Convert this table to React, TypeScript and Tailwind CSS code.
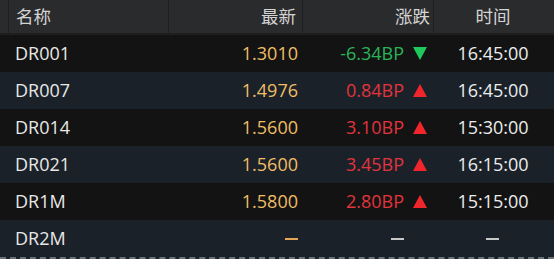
const rows = [
  { name: 'DR001', price: '1.3010', change: '-6.34BP', dir: 'down', time: '16:45:00' },
  { name: 'DR007', price: '1.4976', change: '0.84BP', dir: 'up', time: '16:45:00' },
  { name: 'DR014', price: '1.5600', change: '3.10BP', dir: 'up', time: '15:30:00' },
  { name: 'DR021', price: '1.5600', change: '3.45BP', dir: 'up', time: '16:15:00' },
  { name: 'DR1M', price: '1.5800', change: '2.80BP', dir: 'up', time: '15:15:00' },
  { name: 'DR2M', price: '', change: '', dir: '', time: '' },
]

function Tri({ dir }: { dir: string }) {
  if (dir === 'up')
    return (
      <svg width="14" height="13" viewBox="0 0 14 13" className="ml-[9px]">
        <polygon points="7,0 14,13 0,13" fill="#f0262c" />
      </svg>
    )
  return (
    <svg width="14" height="13" viewBox="0 0 14 13" className="ml-[9px]">
      <polygon points="0,0 14,0 7,13" fill="#1fc85b" />
    </svg>
  )
}

export default function App() {
  return (
    <div
      className="w-[554px] h-[259px] overflow-hidden bg-[#1b2129] text-[18px]"
      style={{ fontFamily: '"Open Sans", "Noto Sans CJK SC", sans-serif' }}
    >
      {/* header */}
      <div className="grid grid-cols-[9px_160px_134px_131px_1fr] h-[35px] bg-[#2a2b2d] border-b-2 border-[#1e1e1f] text-[#d4d4d4] text-[17.5px]">
        <div className="border-r border-[#1e1f20]" />
        <div className="flex items-center pl-[7px] border-r border-[#1e1f20]">名称</div>
        <div className="flex items-center justify-end pr-[6px] border-r border-[#1e1f20]">最新</div>
        <div className="flex items-center justify-end pr-[3px] border-r border-[#1e1f20]">涨跌</div>
        <div className="flex items-center justify-center pr-[2px]">时间</div>
      </div>
      {rows.map((r, i) => (
        <div
          key={r.name}
          className={
            'grid grid-cols-[169px_134px_131px_1fr] h-[37px] items-center ' +
            (i % 2 === 0 ? 'bg-[#131313]' : 'bg-[#1b2129]')
          }
        >
          <div className="pl-[15px] text-[#e8e8e8]">{r.name}</div>
          {r.price ? (
            <div className="text-right pr-[5px] text-[#efbd66]">{r.price}</div>
          ) : (
            <div className="flex justify-end pr-[5px]">
              <div className="w-[13px] h-[2px] bg-[#e2a656]" />
            </div>
          )}
          {r.change ? (
            <div
              className={
                'flex items-center justify-end pr-[7px] ' +
                (r.dir === 'up' ? 'text-[#e2343c]' : 'text-[#2bb35a]')
              }
            >
              <span>{r.change}</span>
              <Tri dir={r.dir} />
            </div>
          ) : (
            <div className="flex justify-end pr-[30px]">
              <div className="w-[13px] h-[2px] bg-[#c8c8c8]" />
            </div>
          )}
          {r.time ? (
            <div className="text-center pr-[2px] text-[#ececec]">{r.time}</div>
          ) : (
            <div className="flex justify-center pr-[4px]">
              <div className="w-[13px] h-[2px] bg-[#c8c8c8]" />
            </div>
          )}
        </div>
      ))}
      <div className="border-t-2 border-dashed border-[#6a6f78]" />
    </div>
  )
}
